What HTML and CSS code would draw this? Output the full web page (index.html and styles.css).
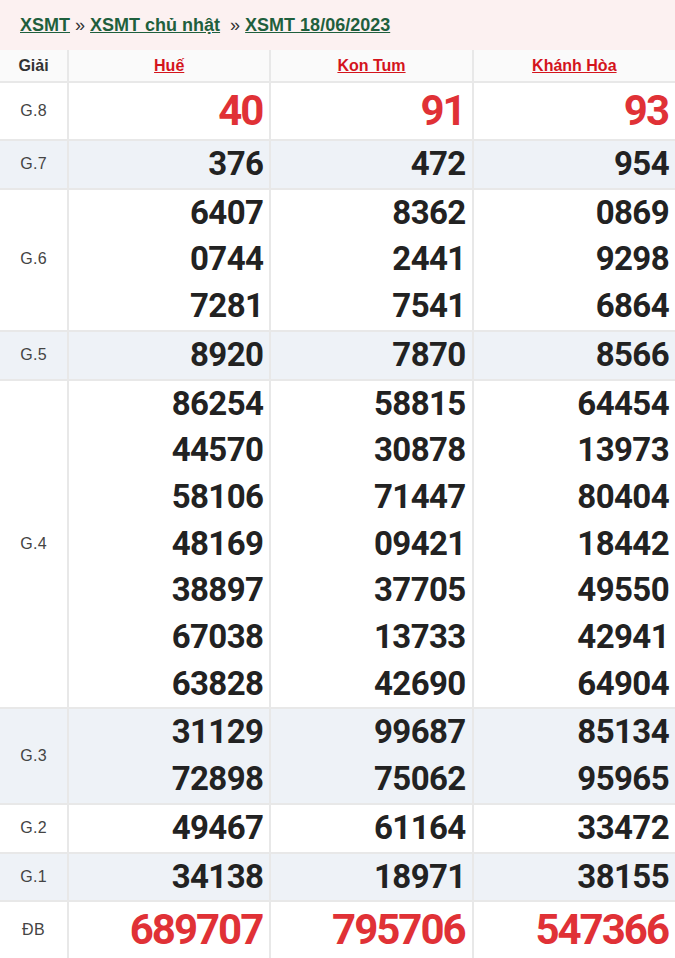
FILE: index.html
```html
<!DOCTYPE html>
<html lang="vi">
<head>
<meta charset="utf-8">
<title>XSMT 18/06/2023</title>
<link rel="stylesheet" href="styles.css">
</head>
<body>
<div class="crumbs">
  <a href="#">XSMT</a> <span class="sep">»</span> <a href="#">XSMT chủ nhật</a> &nbsp;<span class="sep">»</span> <a href="#">XSMT 18/06/2023</a>
</div>
<table class="kq">
  <colgroup><col class="c0"><col class="c1"><col class="c1"><col class="c1"></colgroup>
  <thead>
    <tr class="head">
      <th class="lbl">Giải</th>
      <th><a href="#">Huế</a></th>
      <th><a href="#">Kon Tum</a></th>
      <th><a href="#">Khánh Hòa</a></th>
    </tr>
  </thead>
  <tbody>
    <tr class="big">
      <td class="lbl">G.8</td>
      <td class="red">40</td><td class="red">91</td><td class="red">93</td>
    </tr>
    <tr class="alt">
      <td class="lbl">G.7</td>
      <td>376</td><td>472</td><td>954</td>
    </tr>
    <tr>
      <td class="lbl">G.6</td>
      <td><div>6407</div><div>0744</div><div>7281</div></td>
      <td><div>8362</div><div>2441</div><div>7541</div></td>
      <td><div>0869</div><div>9298</div><div>6864</div></td>
    </tr>
    <tr class="alt">
      <td class="lbl">G.5</td>
      <td>8920</td><td>7870</td><td>8566</td>
    </tr>
    <tr>
      <td class="lbl">G.4</td>
      <td><div>86254</div><div>44570</div><div>58106</div><div>48169</div><div>38897</div><div>67038</div><div>63828</div></td>
      <td><div>58815</div><div>30878</div><div>71447</div><div>09421</div><div>37705</div><div>13733</div><div>42690</div></td>
      <td><div>64454</div><div>13973</div><div>80404</div><div>18442</div><div>49550</div><div>42941</div><div>64904</div></td>
    </tr>
    <tr class="alt">
      <td class="lbl">G.3</td>
      <td><div>31129</div><div>72898</div></td>
      <td><div>99687</div><div>75062</div></td>
      <td><div>85134</div><div>95965</div></td>
    </tr>
    <tr>
      <td class="lbl">G.2</td>
      <td>49467</td><td>61164</td><td>33472</td>
    </tr>
    <tr class="alt">
      <td class="lbl">G.1</td>
      <td>34138</td><td>18971</td><td>38155</td>
    </tr>
    <tr class="big">
      <td class="lbl">ĐB</td>
      <td class="red">689707</td><td class="red">795706</td><td class="red">547366</td>
    </tr>
  </tbody>
</table>
</body>
</html>
```
FILE: styles.css
```css
html, body {
  margin: 0;
  padding: 0;
  background: #ffffff;
}
body {
  font-family: "Liberation Sans", Arial, sans-serif;
  color: #222;
}
.crumbs {
  height: 50px;
  box-sizing: border-box;
  padding: 14px 0 0 20px;
  background: #fcf1f1;
  font-size: 18px;
  font-weight: bold;
  line-height: 22px;
  color: #333;
  white-space: nowrap;
}
.crumbs a {
  color: #1f5f3d;
  text-decoration: underline;
}
.crumbs .sep {
  color: #333;
  font-weight: normal;
}
.kq {
  width: 675px;
  border-collapse: collapse;
  table-layout: fixed;
  margin-left: 0;
}
.kq col.c0 { width: 68px; }
.kq td, .kq th {
  border: 2px solid #e8e8e8;
  padding: 0 6px 0 0;
  text-align: right;
  vertical-align: middle;
}
.kq tr > :first-child { border-left: none; }
.kq tr > :last-child { border-right: none; }
.kq thead tr > * { border-top: none; }
.kq .head th {
  height: 31px;
  background: #fafafa;
  text-align: center;
  padding: 0;
  font-size: 16px;
  font-weight: bold;
}
.kq .head th a {
  color: #d4141c;
  text-decoration: underline;
}
.kq .head th.lbl {
  color: #333;
}
.kq td {
  font-family: Roboto, "Liberation Sans", Arial, sans-serif;
  font-weight: bold;
  font-size: 33px;
  letter-spacing: -0.6px;
  line-height: 46.7px;
  color: #222;
}
.kq td.lbl {
  font-family: "Liberation Sans", Arial, sans-serif;
  font-weight: normal;
  font-size: 16px;
  letter-spacing: 0.3px;
  color: #444;
  text-align: center;
  padding: 0;
}
.kq tr.alt td { background: #eef2f7; }
.kq tr.big td {
  height: 56px;
}
.kq td.red {
  color: #e03136;
  font-size: 42px;
  letter-spacing: -2px;
  padding-right: 7px;
}
```
